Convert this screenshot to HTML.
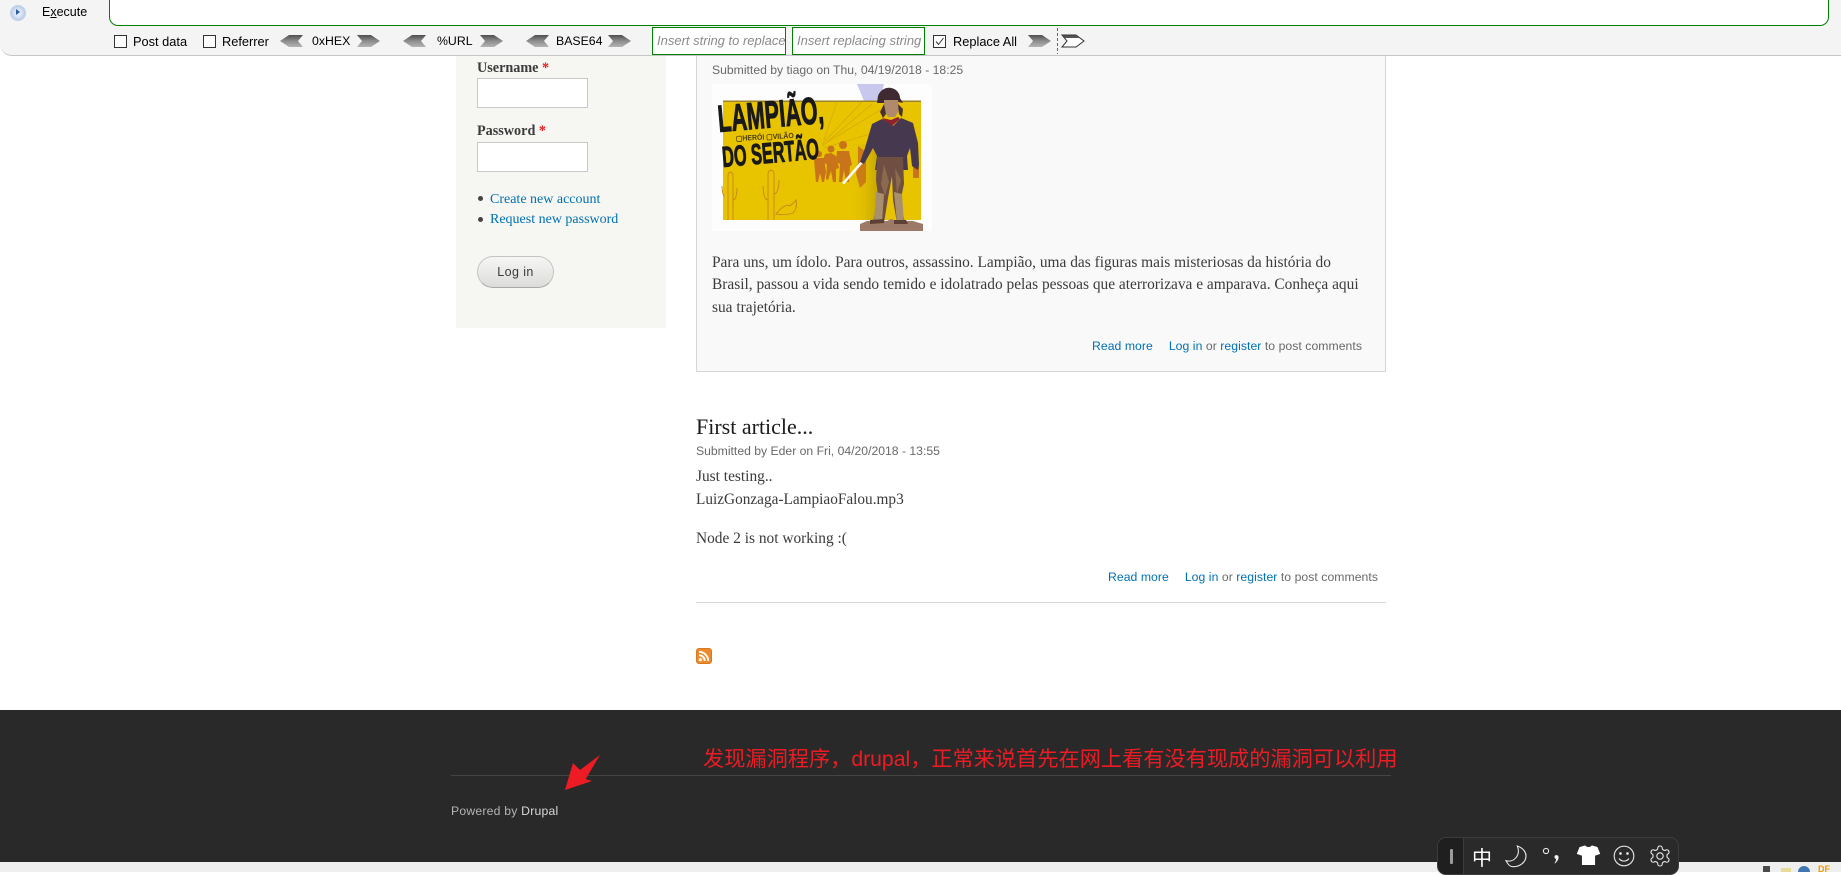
<!DOCTYPE html>
<html><head><meta charset="utf-8">
<style>
html,body{margin:0;padding:0;background:#fff}
body{width:1841px;height:872px;position:relative;overflow:hidden;font-family:"Liberation Sans",sans-serif}
.a{position:absolute;white-space:nowrap}
.s{font-family:"Liberation Serif","Noto Serif CJK SC",serif;color:#3b3b3b;font-size:15px}
.t{font-size:12.2px;color:#68696b;font-family:"Liberation Sans",sans-serif}
.k{letter-spacing:.06px}
.l{color:#0071b3}
.tb{font-family:"Liberation Sans",sans-serif;font-size:12.8px;color:#000}
.cb{position:absolute;width:11px;height:11px;border:1px solid #333;background:#fff;top:35px}
.ph{position:absolute;top:27px;height:26px;border:1px solid #008000;background:#fff;font:italic 13px/26px "Liberation Sans",sans-serif;color:#8a8a8a;overflow:hidden;white-space:nowrap;padding-left:4px;box-sizing:content-box}
.in{position:absolute;left:477px;width:109px;height:28px;border:1px solid #c8c8c8;background:#fff}
</style></head><body>

<!-- sidebar -->
<div class="a" style="left:456px;top:50px;width:210px;height:278px;background:#f6f6f2"></div>
<div class="a s" style="left:477px;top:60px;font-weight:bold;font-size:14.2px">Username <span style="color:#e02020">*</span></div>
<div class="in" style="top:78px"></div>
<div class="a s" style="left:477px;top:123px;font-weight:bold;font-size:14.2px">Password <span style="color:#e02020">*</span></div>
<div class="in" style="top:142px"></div>
<div class="a" style="left:478px;top:196px;width:5px;height:5px;border-radius:50%;background:#444"></div>
<div class="a" style="left:478px;top:217px;width:5px;height:5px;border-radius:50%;background:#444"></div>
<div class="a s" style="left:490px;top:192px;font-size:14px;color:#0071b3">Create new account</div>
<div class="a s" style="left:490px;top:212px;font-size:14px;color:#0071b3">Request new password</div>
<div class="a" style="left:477px;top:256px;width:75px;height:30px;border:1px solid #c4c4c4;border-bottom-color:#a8a8a8;border-radius:16px;background:linear-gradient(#f6f6f5,#dcdcdb);font:12.5px/30px 'Liberation Sans',sans-serif;color:#3a3a3a;text-align:center;letter-spacing:.4px">Log in</div>

<!-- article 1 -->
<div class="a" style="left:696px;top:50px;width:688px;height:321px;background:#f9f9f9;border:1px solid #d6d6d6;border-top:0"></div>
<div class="a t" style="left:712px;top:63px">Submitted by tiago on Thu, 04/19/2018 - 18:25</div>

<svg class="a" style="left:712px;top:84px" width="220" height="147" viewBox="0 0 220 147">
<defs>
<linearGradient id="sh" x1="0" x2="1"><stop offset="0" stop-color="#e7c300" stop-opacity="0"/><stop offset="1" stop-color="#a89000" stop-opacity=".55"/></linearGradient>
<linearGradient id="bs" x1="0" x2="1"><stop offset="0" stop-color="#fff" stop-opacity="0"/><stop offset="1" stop-color="#6a5aa8"/></linearGradient>
</defs>
<rect width="220" height="147" fill="#fdfdfd"/>
<path d="M145 0H172L168 17H152z" fill="#c8c8ee"/>
<rect x="11" y="17" width="198" height="119" fill="#e7c300"/>
<rect x="11" y="16.500" width="198" height="1.500" fill="#9c8428"/>
<g stroke="#cf9a10" stroke-width=".6" opacity=".75"><path d="M110 62L160 20M110 60L150 18M112 56L125 18M112 64L190 40M112 60L175 22"/></g>
<rect x="138" y="60" width="28" height="76" fill="url(#sh)"/>
<g fill="none" stroke="#c8861a" stroke-width=".9">
<path d="M16 136V92c0-5 5-5 5 0v44M13 112c-3 0-3-10-3-10M21 116c4 0 4-12 4-12"/>
<path d="M56 136V90c0-5 6-5 6 0v46M56 116c-5 0-5-14-5-14M62 110c5 0 5-14 5-14M64 130c6-8 12-10 14-8 3-3 5-4 6-6 1 6 0 10-3 13-6 2-12 2-17 1z"/>
</g>
<g fill="#c9741a">
<circle cx="107" cy="70" r="3"/><path d="M102 74h10l2 14-2 10h-2l-2-9-2 9h-2l-1-10z"/>
<circle cx="119" cy="65" r="3.500"/><path d="M113 70l6-1 5 3 3 12-3 1 0 13h-3l-2-11-3 9-2-1 1-14-4-4z"/>
<circle cx="131" cy="61" r="4"/><path d="M125 67h12l3 14-2 1-1 16h-3l-2-12-2 12h-3l1-18-4-2z"/>
<path d="M146 62l8 6 0 30-6 6-4-14 2-12z" opacity=".9"/>
<path d="M201 70l6 8v16l-6 0z"/>
</g>
<path d="M130 99L151 75l1.500 2-20 23z" fill="#fff"/>
<path d="M148 147H150L162 138H190V147z" fill="url(#bs)" opacity=".5"/>
<text x="7" y="48" transform="rotate(-5 7 48)" font-family="Liberation Sans" font-weight="bold" font-size="38" fill="#191919" stroke="#191919" stroke-width="1" textLength="106" lengthAdjust="spacingAndGlyphs">LAMPIÃO,</text>
<text x="24" y="57" transform="rotate(-3 24 57)" font-family="Liberation Sans" font-weight="bold" font-size="7.500" fill="#4a3b10" textLength="58" lengthAdjust="spacingAndGlyphs">▢HERÓI ▢VILÃO</text>
<text x="11" y="83" transform="rotate(-5 11 83)" font-family="Liberation Sans" font-weight="bold" font-size="29" fill="#191919" stroke="#191919" stroke-width=".9" textLength="97" lengthAdjust="spacingAndGlyphs">DO SERTÃO</text>
<!-- figure -->
<path d="M166 12c2-6 8-9 13-8 6 1 9 6 9 10l3 5-9-2-9 2-8 0z" fill="#3e2a30"/>
<path d="M172 16h14l1 10-4 7h-7l-4-7z" fill="#b08a6c"/>
<path d="M172 20l2 10-3 4-3-6zM186 20l1 10 3 3 1-8z" fill="#4a3030"/>
<path d="M170 34l9 2 7-3 2 2-7 6 -3 6-3-7z" fill="#8e2230"/>
<path d="M170 35l-10 5-7 24-5 14 4 2 9-16 4 8-2 14 1 0 32 0-1-14 3-8 2 18 6 4 1-5-1-22-5-20-12-5-8 8z" fill="#46384e"/>
<path d="M165 73H191L192 100 189 114 190 126 193 139H185L181 116 180 92 176 114 172 139H161L166 112 164 96z" fill="#6e4f42"/>
<path d="M172 80l5 18-4 14-4-12zM183 84l6 12-4 14z" fill="#8c6a50"/>
<path d="M164 108l8 2-2 29h-8zM182 108l8 2 2 29h-7z" fill="#a8906e"/>
<path d="M148 147V140l7-3h20l4-2 6 2h16l10 3v7z" fill="#9d7a68"/>
<path d="M158 136l14-1v4l-14 1zM182 136h12l2 4h-14z" fill="#5d4034"/>
</svg>

<div class="a s" style="left:712px;top:252px;font-size:15.4px;line-height:22.4px;white-space:pre">Para uns, um ídolo. Para outros, assassino. Lampião, uma das figuras mais misteriosas da história do
Brasil, passou a vida sendo temido e idolatrado pelas pessoas que aterrorizava e amparava. Conheça aqui
sua trajetória.</div>
<div class="a t k" style="left:1092px;top:339px"><span class="l">Read more</span><span style="display:inline-block;width:16px"></span><span class="l">Log in</span> or <span class="l">register</span> to post comments</div>

<!-- article 2 -->
<div class="a s" style="left:696px;top:414px;font-size:22px;color:#1a1a1a">First article...</div>
<div class="a t" style="left:696px;top:444px">Submitted by Eder on Fri, 04/20/2018 - 13:55</div>
<div class="a s" style="left:696px;top:468px;font-size:15.4px">Just testing..</div>
<div class="a s" style="left:696px;top:491px;font-size:15.3px">LuizGonzaga-LampiaoFalou.mp3</div>
<div class="a s" style="left:696px;top:530px;font-size:15.4px">Node 2 is not working :(</div>
<div class="a t k" style="left:1108px;top:570px"><span class="l">Read more</span><span style="display:inline-block;width:16px"></span><span class="l">Log in</span> or <span class="l">register</span> to post comments</div>
<div class="a" style="left:696px;top:602px;width:690px;height:1px;background:#d6d6d6"></div>

<svg class="a" style="left:696px;top:648px" width="16" height="16" viewBox="0 0 16 16">
<rect x=".5" y=".5" width="15" height="15" rx="2.5" fill="#ef8a2c" stroke="#d8781f"/>
<circle cx="4.3" cy="11.7" r="1.6" fill="#fff"/>
<path d="M3 7.2a5.8 5.8 0 0 1 5.8 5.8M3 3.8a9.2 9.2 0 0 1 9.2 9.2" fill="none" stroke="#fff" stroke-width="1.9"/>
</svg>

<!-- footer -->
<div class="a" style="left:0;top:710px;width:1841px;height:152px;background:#292929"></div>
<div class="a" style="left:0;top:862px;width:1841px;height:10px;background:#efefef"></div>
<div class="a" style="left:451px;top:775px;width:940px;height:1px;background:#444"></div>
<div class="a" style="left:451px;top:804px;font-size:12.2px;color:#b4b4b4;letter-spacing:.22px">Powered by <span style="color:#d8d8d8">Drupal</span></div>
<div class="a" style="left:703px;top:745px;font-family:'Liberation Sans','Noto Sans CJK SC',sans-serif;font-size:21.2px;line-height:30px;color:#ed1c24">发现漏洞程序，drupal，正常来说首先在网上看有没有现成的漏洞可以利用</div>
<svg class="a" style="left:560px;top:752px" width="46" height="40" viewBox="0 0 46 40">
<path d="M5 38L13 11 20 18 40 3 25.700 27 32 29z" fill="#ed1c24"/>
</svg>

<!-- tray -->
<div class="a" style="left:1763px;top:866px;width:7px;height:6px;background:#4a4a4a"></div>
<div class="a" style="left:1781px;top:868px;width:10px;height:4px;background:#e7dc98"></div>
<div class="a" style="left:1798px;top:866px;width:12px;height:6px;border-radius:6px 6px 0 0;background:#3f77b5"></div>
<div class="a" style="left:1818px;top:865px;width:12px;height:7px;color:#f59a00;font:bold 9px/8px 'Liberation Sans',sans-serif">DF</div>

<!-- IME bar -->
<div class="a" style="left:1437px;top:837px;width:240px;height:36px;border-radius:9px;background:#2a2a2a;border:1px solid #3c3c3c;overflow:hidden">
 <div style="position:absolute;left:0;top:0;width:25px;height:36px;background:#1f1f1f;border-right:1px solid #3c3c3c"></div>
 <div style="position:absolute;left:12px;top:11px;width:3px;height:15px;background:#9a9a9a;border-radius:1px"></div>
</div>
<div class="a" style="left:1472px;top:845px;font:20px/24px 'Noto Sans CJK SC',sans-serif;color:#fff">中</div>
<svg class="a" style="left:1500px;top:840px" width="190" height="32" viewBox="0 0 190 32" fill="none" stroke="#e8e8e8" stroke-width="1.1">
<path d="M17.300 6C23 8 26 12 26 16C26 22 20 27 13 26.700C10 26.700 7.500 24 6 20.700C14 23 21 15 17.300 6z"/>
<circle cx="46" cy="11" r="2.600"/>
<path d="M55 15.500c2.500-1 4 .5 3.500 3-.4 1.800-2 3.500-3.500 5l-.5-.5c1-1 1.500-2.500 1.500-4-1.500-.5-2-2.500-1-3.500z" fill="#f4f4f4" stroke="none"/>
<path d="M80 7.500l5-1.500c1 2 6 2 7 0l5 1.500 2.500 6-4 1.500-1-1v10.500h-12v-10.500l-1 1-4-1.500z" fill="#fff" stroke="#fff"/>
<circle cx="124" cy="16" r="9.800"/><circle cx="120.500" cy="13.500" r=".8" fill="#e8e8e8"/><circle cx="127.500" cy="13.500" r=".8" fill="#e8e8e8"/>
<path d="M119 18.500c2.500 3.500 7.500 3.500 10 0"/>
<g transform="translate(148 4)">
<path d="M12.220 2h-.44a2 2 0 0 0-2 2v.18a2 2 0 0 1-1 1.730l-.43.25a2 2 0 0 1-2 0l-.15-.08a2 2 0 0 0-2.730.73l-.22.38a2 2 0 0 0 .73 2.730l.15.1a2 2 0 0 1 1 1.720v.51a2 2 0 0 1-1 1.740l-.15.09a2 2 0 0 0-.73 2.730l.22.38a2 2 0 0 0 2.730.73l.15-.08a2 2 0 0 1 2 0l.43.25a2 2 0 0 1 1 1.730V20a2 2 0 0 0 2 2h.44a2 2 0 0 0 2-2v-.18a2 2 0 0 1 1-1.730l.43-.25a2 2 0 0 1 2 0l.15.08a2 2 0 0 0 2.730-.73l.22-.39a2 2 0 0 0-.73-2.730l-.15-.08a2 2 0 0 1-1-1.740v-.5a2 2 0 0 1 1-1.740l.15-.09a2 2 0 0 0 .73-2.730l-.22-.38a2 2 0 0 0-2.730-.73l-.15.08a2 2 0 0 1-2 0l-.43-.25a2 2 0 0 1-1-1.730V4a2 2 0 0 0-2-2z"/>
<circle cx="12" cy="12" r="3.200"/>
</g>
</svg>

<!-- toolbar -->
<div class="a" style="left:0;top:-12px;width:1841px;height:67px;background:#f4f4f4;border-bottom:1px solid #c6c6c6;border-radius:0 0 0 12px"></div>
<div class="a" style="left:109px;top:-12px;width:1718px;height:35.500px;background:#fff;border:1px solid #008000;border-radius:0 0 9px 9px"></div>
<div class="a" style="left:10px;top:5px;width:14px;height:14px;border-radius:50%;background:radial-gradient(circle,#dfe9f7 30%,#9fb9dc 100%);border:1px solid #c2d0e4"></div>
<div class="a" style="left:16px;top:9px;width:0;height:0;border-left:4px solid #2f5d9a;border-top:3.500px solid transparent;border-bottom:3.500px solid transparent"></div>
<div class="a tb" style="left:42px;top:5px;font-size:12.500px">E<span style="text-decoration:underline">x</span>ecute</div>

<div class="cb" style="left:114px"></div>
<div class="a tb" style="left:133px;top:34px">Post data</div>
<div class="cb" style="left:203px"></div>
<div class="a tb" style="left:222px;top:34px">Referrer</div>

<svg class="a" style="left:0;top:0" width="1100" height="56" viewBox="0 0 1100 56">
<defs>
<linearGradient id="g" x1="0" y1="0" x2="0" y2="1"><stop offset="0" stop-color="#4e4e4e"/><stop offset=".5" stop-color="#8d8d8d"/><stop offset="1" stop-color="#b4b4b4"/></linearGradient>
<path id="ll" d="M0 6L9 0H23L18 6L23 12H9z" fill="url(#g)"/>
<path id="rr" d="M0 0H14L23 6L14 12H0L5 6z" fill="url(#g)"/>
</defs>
<use href="#ll" x="280" y="35"/><use href="#rr" x="357" y="35"/>
<use href="#ll" x="403" y="35"/><use href="#rr" x="480" y="35"/>
<use href="#ll" x="526" y="35"/><use href="#rr" x="608" y="35"/>
<use href="#rr" x="1028" y="35"/>
<path d="M1062 35H1076L1084 41L1076 47H1062L1067 41z" fill="#fff" stroke="#333" stroke-width="1"/>
<path d="M1062.500 35.500H1076L1080 38H1065z" fill="#555"/>
<path d="M1057.500 28V54" stroke="#666" stroke-dasharray="3 2"/>
</svg>
<div class="a tb" style="left:312px;top:34px;font-size:12.300px">0xHEX</div>
<div class="a tb" style="left:437px;top:34px;font-size:12.300px">%URL</div>
<div class="a tb" style="left:556px;top:34px;font-size:12.300px">BASE64</div>
<div class="ph" style="left:652px;width:128px">Insert string to replace</div>
<div class="ph" style="left:792px;width:127px">Insert replacing string</div>
<div class="cb" style="left:933px"></div>
<svg class="a" style="left:934px;top:36px" width="11" height="11" viewBox="0 0 11 11"><path d="M2 5.500L4.500 8.500 9.500 2" fill="none" stroke="#333" stroke-width="1"/></svg>
<div class="a tb" style="left:953px;top:34px">Replace All</div>
</body></html>
